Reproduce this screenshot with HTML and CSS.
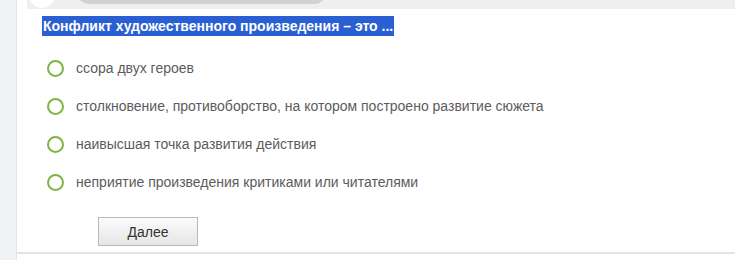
FILE: index.html
```html
<!DOCTYPE html>
<html lang="ru">
<head>
    <meta charset="UTF-8">
    <title>Тест</title>
    <link rel="stylesheet" href="styles.css">
</head>
<body>
    <div class="page">
        <div class="sidebar"></div>
        <div class="main">
            <div class="topbar">
                <div class="avatar"></div>
                <div class="search"></div>
            </div>
            <div class="quiz">
                <h2 class="question"><span class="selected">Конфликт художественного произведения – это ...</span></h2>
                <ul class="answers">
                    <li class="answer"><span class="radio"></span>ссора двух героев</li>
                    <li class="answer"><span class="radio"></span>столкновение, противоборство, на котором построено развитие сюжета</li>
                    <li class="answer"><span class="radio"></span>наивысшая точка развития действия</li>
                    <li class="answer"><span class="radio"></span>неприятие произведения критиками или читателями</li>
                </ul>
                <button class="next-button">Далее</button>
            </div>
        </div>
    </div>
</body>
</html>
```

FILE: styles.css
```css
* {
    margin: 0;
    padding: 0;
    box-sizing: border-box;
}

body {
    font-family: Arial, 'Liberation Sans', sans-serif;
    background: white;
    width: 735px;
    height: 260px;
    overflow: hidden;
}

.page {
    display: flex;
    height: 260px;
}

.sidebar {
    width: 17px;
    background: #f0f2f3;
    border-right: 1px solid #e2e4e6;
}

.main {
    flex: 1;
    display: flex;
    flex-direction: column;
}

.topbar {
    height: 9px;
    margin-left: 10px;
    background: #efefef;
    position: relative;
    overflow: hidden;
}

.avatar {
    position: absolute;
    left: 2px;
    top: -18px;
    width: 26px;
    height: 26px;
    border-radius: 50%;
    background: white;
}

.search {
    position: absolute;
    left: 51px;
    top: -16px;
    width: 247px;
    height: 20px;
    border-radius: 10px;
    background: #d2d2d2;
}

.quiz {
    height: 245px;
    border-bottom: 2px solid #e4e4e4;
    padding-left: 25px;
}

.question {
    margin-top: 7px;
    font-size: 14px;
    font-weight: bold;
    line-height: 20px;
    color: white;
}

.selected {
    background: #2a5fd4;
    padding: 0 1px;
    display: inline-block;
}

.answers {
    list-style: none;
    margin-top: 13px;
}

.answer {
    display: flex;
    align-items: center;
    height: 38px;
    font-size: 14px;
    color: #5c5c5c;
    padding-left: 5px;
}

.radio {
    width: 17px;
    height: 17px;
    border: 2px solid #7db544;
    border-radius: 50%;
    margin-right: 12px;
}

.next-button {
    margin-top: 16px;
    margin-left: 56px;
    width: 100px;
    height: 29px;
    font-family: Arial, 'Liberation Sans', sans-serif;
    font-size: 14px;
    color: #333;
    background: linear-gradient(#fbfbfb, #e6e6e6);
    border: 1px solid #b9b9b9;
}
```
